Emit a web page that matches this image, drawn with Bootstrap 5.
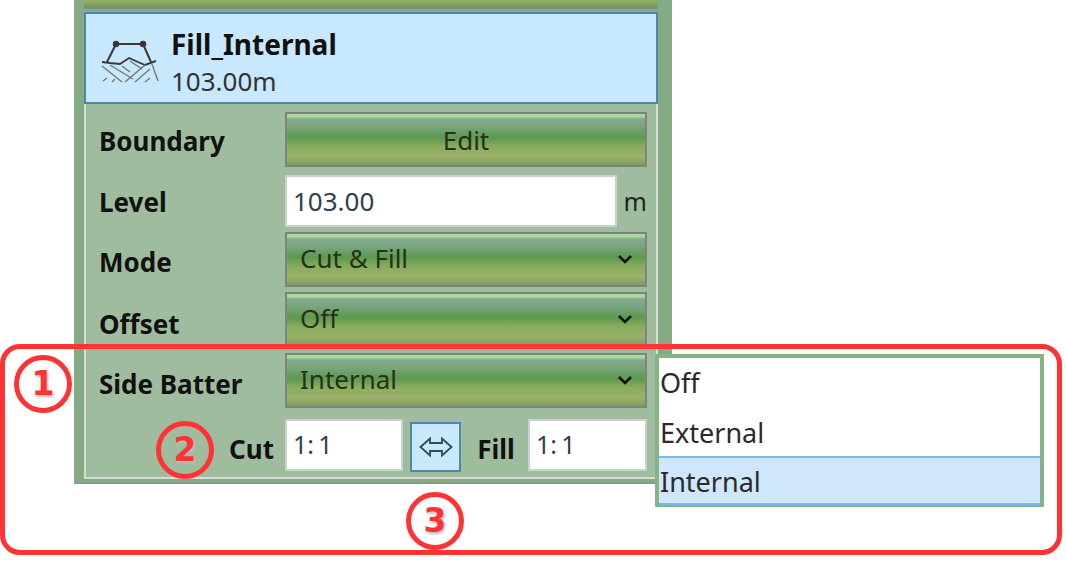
<!DOCTYPE html>
<html lang="en">
<head>
  <meta charset="UTF-8" />
  <meta name="viewport" content="width=device-width, initial-scale=1.0"/>
  <title>Side Batter</title>
  <link href="https://cdn.jsdelivr.net/npm/bootstrap@5.3.3/dist/css/bootstrap.min.css" rel="stylesheet">
  <style>
    html, body { height: 562px; overflow: hidden; }
    body { background: #fff; font-family: "Noto Sans", "Open Sans", sans-serif; color: #1c1c1c; position: relative; }
    .side-panel { margin-left: 74px; width: 598px; height: 484px; background: #84ab84; padding-left: 10px; padding-right: 14px; border-bottom: 2px solid #8c9a8c; }
    .top-strip { height: 9px; background: linear-gradient(#9ab268, #6f9a5c); border-bottom: 2px solid #7d8f7d; }
    .sel-item { height: 92px; margin-top: 3px; background: #c8e8fd; border: 2px solid #4c87b0; padding-left: 14px; gap: 11px; }
    .sel-text { padding-top: 9px; }
    .sel-name { font-size: 28px; font-weight: 700; line-height: 37px; color: #111; }
    .sel-sub { font-size: 26px; line-height: 37px; color: #333; }
    .form-area { height: 375px; background: #a0bc9f; border-left: 2px solid #d5dfd4; border-right: 2px solid #d5dfd4; border-bottom: 2px solid #d5dfd4; padding: 8px 9px 0 13px; }
    .f-row { display: flex; align-items: center; }
    .gap-s { margin-top: 5px; }
    .gap-m { margin-top: 6px; }
    .gap-l { margin-top: 8px; }
    .gap-x { margin-top: 10px; }
    .f-label { width: 186px; font-size: 26px; font-weight: 700; line-height: 34px; color: #111; flex: none; }
    .dn-1 { padding-top: 2px; }
    .dn-2 { padding-top: 4px; }
    .dn-3 { padding-top: 6px; }
    .dn-4 { padding-top: 8px; }
    .cut-label { text-align: right; padding-right: 11px; }
    .fill-label { width: 67px; text-align: center; padding-left: 3px; padding-top: 8px; }
    .grad-box { width: 362px; height: 55px; border: 2px solid #7f857c; background: linear-gradient(#a9d99b 0, #a9d99b 5%, #83a98f 10%, #7aa580 24%, #5c9a4e 46%, #8aac5e 64%, #9ab268 84%, #7f9c62 100%); font-size: 26px; color: #26301c; flex: none; }
    .grad-btn { display: flex; align-items: center; justify-content: center; padding-top: 2px; }
    .grad-select { display: flex; align-items: center; justify-content: space-between; padding: 0 12px 2px 13px; }
    .txt-box { background: #fff; border: 2px solid #c9d1c9; font-size: 26px; color: #2f4050; height: 52px; display: flex; align-items: center; padding-left: 6px; flex: none; }
    .level-box { width: 332px; }
    .ratio-box { width: 118px; font-size: 25px; }
    .ratio-box2 { width: 119px; font-size: 25px; }
    .unit-m { font-size: 25px; color: #222; width: 30px; text-align: right; padding-top: 2px; }
    .swap-btn { width: 51px; height: 50px; background: #c8e8fd; border: 2px solid #4c87b0; flex: none; margin-left: 7px; align-self: flex-start; margin-top: 4px; }
    .drop-list { position: absolute; left: 655px; top: 354px; width: 389px; height: 153px; background: #fff; border: 4px solid #84b384; }
    .drop-opt { height: 49px; font-size: 27px; line-height: 49px; padding-left: 1px; color: #2a2a2a; }
    .drop-opt-ext { line-height: 51px; }
    .drop-opt-on { height: 49px; font-size: 27px; line-height: 47px; padding-left: 1px; color: #2a2a2a; background: #cfe6fd; border-top: 2px solid #7fb6ea; border-bottom: 2px solid #7fb6ea; }
    .red-frame { position: absolute; left: 0; top: 344px; width: 1062px; height: 211px; border: 5px solid #ff3333; border-radius: 20px; pointer-events: none; }
    .num-ring { position: absolute; width: 58px; height: 58px; border: 5px solid #ff3333; border-radius: 50%; color: #ff3333; font-family: "DejaVu Sans", sans-serif; font-weight: 700; font-size: 33px; line-height: 48px; text-align: center; text-shadow: 1px 2px 3px #bbb; }
    .ring-a { left: 14px; top: 355px; }
    .ring-b { left: 156px; top: 421px; }
    .ring-c { left: 406px; top: 492px; }
  </style>
</head>
<body>

  <div class="side-panel">
    <div class="top-strip"></div>

    <div class="sel-item d-flex align-items-center">
      <svg width="60" height="52" viewBox="0 0 60 52" fill="none" stroke="#3a3a3a" stroke-width="1.7">
        <path d="M16 12H43M16 12L7 30M43 12L51 30" stroke-width="2"/>
        <circle cx="16" cy="12" r="2.4" fill="#333"/><circle cx="43" cy="12" r="2.4" fill="#333"/>
        <path d="M2 30L10 31L20 32L29 26L38 30L45 33L56 29" stroke-width="1.9"/>
        <path d="M2 34L22 50M10 33L33 47M22 34L30 40M30 29L42 37M25 50L45 33M35 50L50 37M45 50L50 46M52 32L58 49M3 49L7 46M12 50L15 47" stroke="#777" stroke-width="1.4"/>
      </svg>
      <div class="sel-text">
        <div class="sel-name">Fill_Internal</div>
        <div class="sel-sub">103.00m</div>
      </div>
    </div>

    <div class="form-area">
      <div class="f-row">
        <div class="f-label dn-1">Boundary</div>
        <div class="grad-box grad-btn">Edit</div>
      </div>
      <div class="f-row gap-l">
        <div class="f-label dn-1">Level</div>
        <div class="txt-box level-box">103.00</div>
        <div class="unit-m">m</div>
      </div>
      <div class="f-row gap-s">
        <div class="f-label dn-2">Mode</div>
        <div class="grad-box grad-select"><span>Cut &amp; Fill</span>
          <svg width="16" height="10" viewBox="0 0 16 10" fill="none" stroke="#111" stroke-width="2.6"><path d="M2 2L8 8L14 2"/></svg>
        </div>
      </div>
      <div class="f-row gap-s">
        <div class="f-label dn-4">Offset</div>
        <div class="grad-box grad-select"><span>Off</span>
          <svg width="16" height="10" viewBox="0 0 16 10" fill="none" stroke="#111" stroke-width="2.6"><path d="M2 2L8 8L14 2"/></svg>
        </div>
      </div>
      <div class="f-row gap-m">
        <div class="f-label dn-3">Side Batter</div>
        <div class="grad-box grad-select"><span>Internal</span>
          <svg width="16" height="10" viewBox="0 0 16 10" fill="none" stroke="#111" stroke-width="2.6"><path d="M2 2L8 8L14 2"/></svg>
        </div>
      </div>
      <div class="f-row gap-x">
        <div class="f-label cut-label dn-4">Cut</div>
        <div class="txt-box ratio-box">1:&#8201;1</div>
        <div class="swap-btn d-flex align-items-center justify-content-center">
          <svg width="34" height="22" viewBox="0 0 34 22" fill="none" stroke="#33485a" stroke-width="1.8"><path d="M1.500 11L11 2.500V7H23V2.500L32.500 11L23 19.500V15H11V19.500Z"/></svg>
        </div>
        <div class="f-label fill-label">Fill</div>
        <div class="txt-box ratio-box2">1:&#8201;1</div>
      </div>
    </div>
  </div>

  <div class="drop-list">
    <div class="drop-opt">Off</div>
    <div class="drop-opt drop-opt-ext">External</div>
    <div class="drop-opt-on">Internal</div>
  </div>

  <div class="red-frame"></div>
  <div class="num-ring ring-a">1</div>
  <div class="num-ring ring-b">2</div>
  <div class="num-ring ring-c">3</div>

</body>
</html>
